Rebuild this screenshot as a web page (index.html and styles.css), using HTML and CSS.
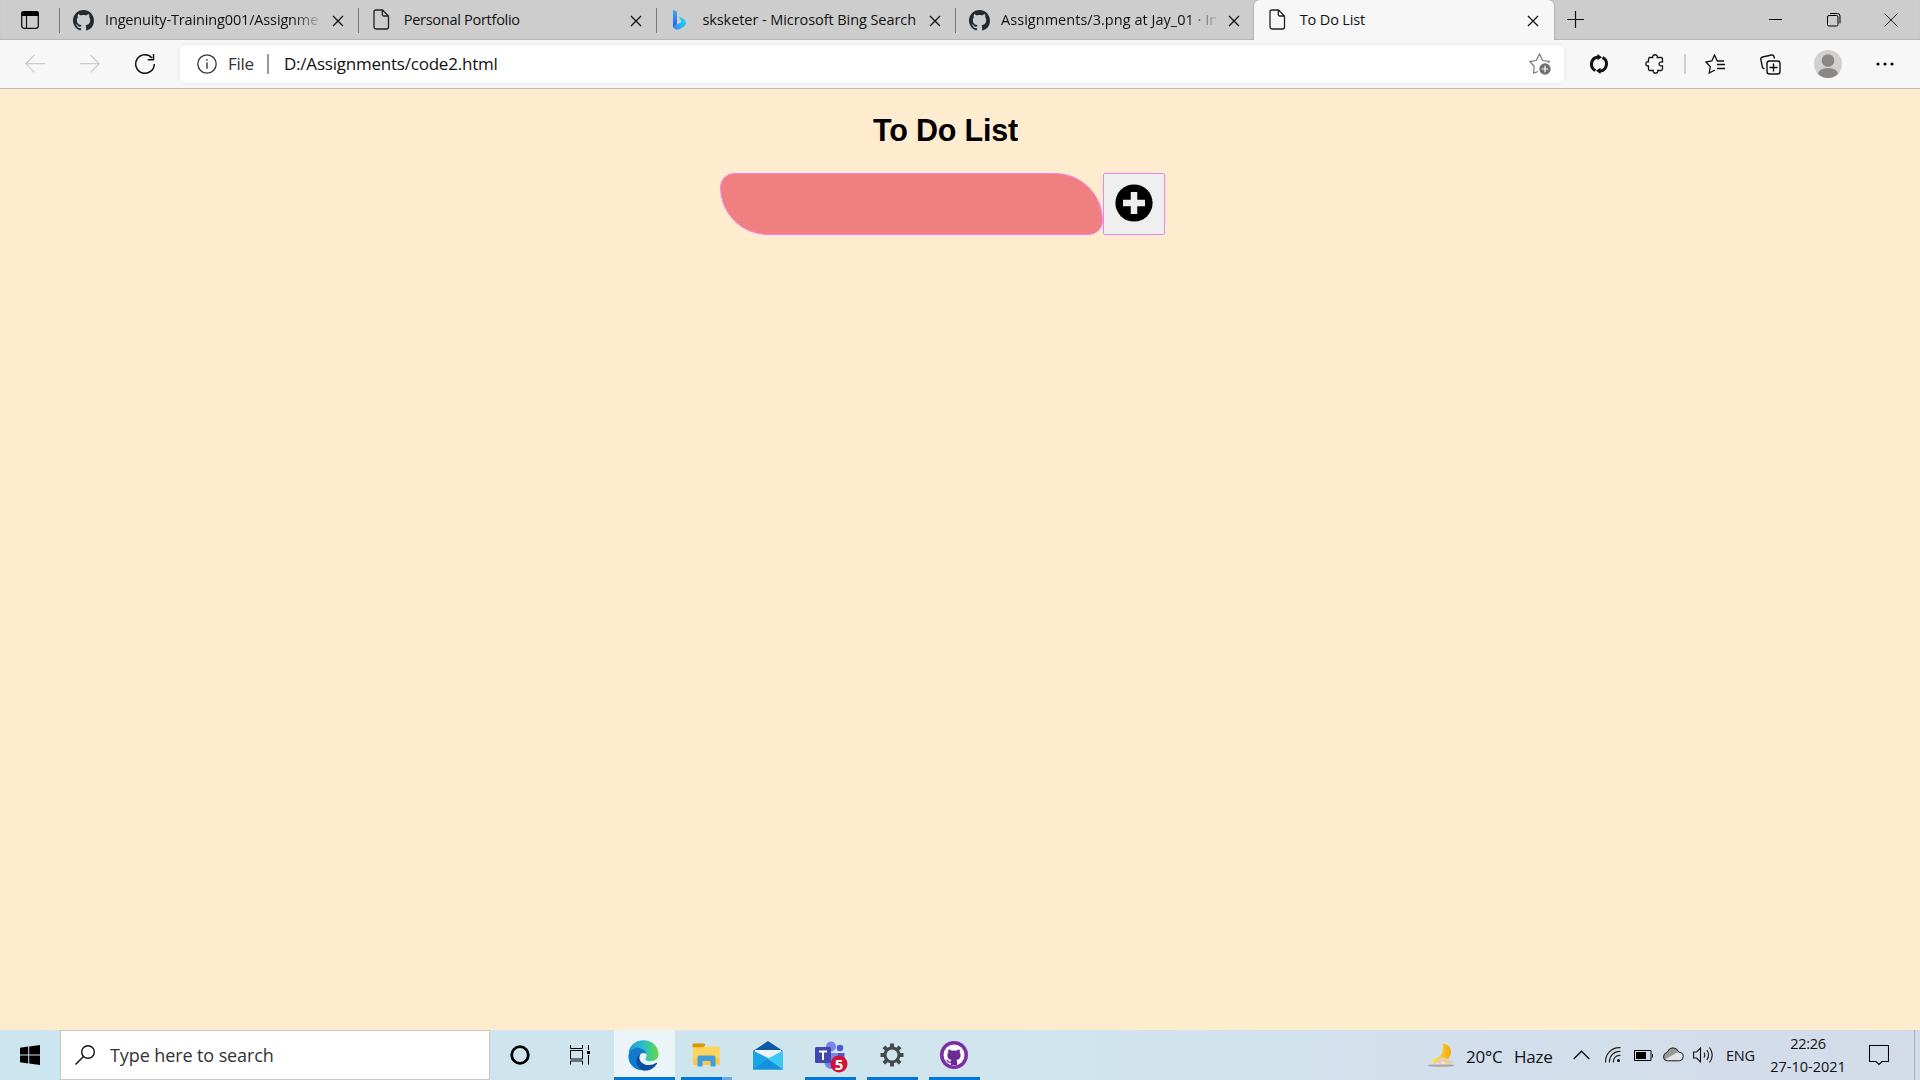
FILE: index.html
```html
<!DOCTYPE html>
<html lang="en">
<head>
<meta charset="utf-8">
<title>To Do List</title>
<link rel="stylesheet" href="styles.css">
</head>
<body>
<svg class="defs" width="0" height="0" aria-hidden="true">
  <symbol id="octocat" viewBox="0 0 16 16"><path d="M8 0C3.58 0 0 3.58 0 8c0 3.54 2.29 6.53 5.47 7.59.4.07.55-.17.55-.38 0-.19-.01-.82-.01-1.49-2.01.37-2.53-.49-2.69-.94-.09-.23-.48-.94-.82-1.13-.28-.15-.68-.52-.01-.53.63-.01 1.08.58 1.23.82.72 1.21 1.87.87 2.33.66.07-.52.28-.87.51-1.07-1.78-.2-3.64-.89-3.64-3.95 0-.87.31-1.59.82-2.15-.08-.2-.36-1.02.08-2.12 0 0 .67-.21 2.2.82.64-.18 1.32-.27 2-.27s1.36.09 2 .27c1.53-1.04 2.2-.82 2.2-.82.44 1.1.16 1.92.08 2.12.51.56.82 1.27.82 2.15 0 3.07-1.87 3.75-3.65 3.95.29.25.54.73.54 1.48 0 1.07-.01 1.93-.01 2.2 0 .21.15.46.55.38A8.01 8.01 0 0 0 16 8c0-4.42-3.58-8-8-8z"/></symbol>
  <symbol id="page" viewBox="0 0 20 22"><path d="M4 1H10.500L16.500 7V18a2 2 0 0 1-2 2H4a2 2 0 0 1-2-2V3a2 2 0 0 1 2-2zM10.300 1V5.500a1.500 1.500 0 0 0 1.500 1.500H16.500" fill="none" stroke="#222" stroke-width="1.300"/></symbol>
  <symbol id="cross" viewBox="0 0 12 12"><path d="M1 1 11 11M11 1 1 11" fill="none" stroke="currentColor" stroke-width="1.300"/></symbol>
</svg>

<header class="tabs">
  <div class="tab-actions">
    <svg width="20" height="20" viewBox="0 0 20 20"><rect x="1.700" y="1.700" width="16.600" height="16.600" rx="2.500" fill="none" stroke="#111" stroke-width="1.300"/><path d="M1 6V4a3 3 0 0 1 3-3h12a3 3 0 0 1 3 3v2z"/><path d="M6.500 6v12" stroke="#111" stroke-width="1.200"/></svg>
  </div>
  <div class="tab">
    <svg class="favicon" width="21" height="21" fill="#24292f"><use href="#octocat"/></svg>
    <span class="title fade t1">Ingenuity-Training001/Assignme</span>
    <svg class="close" width="12" height="12"><use href="#cross"/></svg>
  </div>
  <div class="tab">
    <svg class="favicon" width="20" height="22"><use href="#page"/></svg>
    <span class="title t2">Personal Portfolio</span>
    <svg class="close" width="12" height="12"><use href="#cross"/></svg>
  </div>
  <div class="tab">
    <svg class="favicon" width="20" height="22" viewBox="0 0 20 22"><defs><linearGradient id="b1" x2="0" y2="1"><stop stop-color="#38b0fa"/><stop offset="1" stop-color="#2458e8"/></linearGradient><linearGradient id="b2" x1="1" x2="0" y2="1"><stop stop-color="#22e5e9"/><stop offset="1" stop-color="#2c86f5"/></linearGradient></defs><path d="M3 1 7 2.500V15L3.500 18.500Q3 18 3 17z" fill="url(#b1)"/><path d="M9 7.500 14 10q2.500 1.500 2 5c-.5 2-3 3-5.500 4.600-3.500 2.200-7 .4-7.300-2.200L11.500 13z" fill="url(#b2)"/></svg>
    <span class="title t3">sksketer - Microsoft Bing Search</span>
    <svg class="close" width="12" height="12"><use href="#cross"/></svg>
  </div>
  <div class="tab">
    <svg class="favicon" width="21" height="21" fill="#24292f"><use href="#octocat"/></svg>
    <span class="title fade t4">Assignments/3.png at Jay_01 · In</span>
    <svg class="close" width="12" height="12"><use href="#cross"/></svg>
  </div>
  <div class="tab active">
    <svg class="favicon" width="20" height="22"><use href="#page"/></svg>
    <span class="title t5">To Do List</span>
    <svg class="close" width="12" height="12"><use href="#cross"/></svg>
  </div>
  <svg class="new-tab" width="18" height="18" viewBox="0 0 18 18"><path d="M8.500 0v17M0 8.500h17" stroke="#111" stroke-width="1.200"/></svg>
  <div class="window-controls">
    <svg width="14" height="14" viewBox="0 0 14 14"><path d="M0 6.500h13" stroke="#000"/></svg>
    <svg width="14" height="14" viewBox="0 0 14 14" fill="none" stroke="#000"><rect x=".5" y="2.500" width="10.500" height="10.500" rx="1.500"/><path d="M3 .5h7.500a2.500 2.500 0 0 1 2.500 2.500v7.500"/></svg>
    <svg width="14" height="14" viewBox="0 0 14 14"><path d="M.5.5l13 13M13.500.5l-13 13" stroke="#222"/></svg>
  </div>
</header>

<nav class="toolbar">
  <svg class="back" width="20" height="20" viewBox="0 0 20 20"><path d="M9.500 1 .8 9.700l8.700 8.700M.8 9.700H20" fill="none" stroke="#ccc" stroke-width="1.300"/></svg>
  <svg class="forward" width="20" height="20" viewBox="0 0 20 20"><path d="M10.500 1l8.700 8.700-8.700 8.700M19.200 9.700H0" fill="none" stroke="#ccc" stroke-width="1.300"/></svg>
  <svg class="reload" width="22" height="22" viewBox="0 0 22 22"><path d="M20.300 11A9.300 9.300 0 1 1 18 4.900M19.500 1v5.700h-5.700" fill="none" stroke="#111" stroke-width="1.500"/></svg>
  <div class="omnibox">
    <svg class="info" width="20" height="20" viewBox="0 0 20 20"><circle cx="10" cy="10" r="9.200" fill="none" stroke="#333" stroke-width="1.300"/><path d="M10 8.500v6.300M10 5.200v1.600" stroke="#333" stroke-width="1.400"/></svg>
    <span class="scheme">File</span>
    <span class="divider"></span>
    <span class="url">D:/Assignments/code2.html</span>
    <svg class="favorite" width="22" height="22" viewBox="0 0 22 22"><path d="M9 18.500 4.500 20.200 5.200 13.500 1 8.500l6.200-1L10.500 1l3.200 6.500 6.500 1-1 1.500" fill="none" stroke="#777" stroke-width="1.200"/><circle cx="16" cy="16" r="5.700" fill="#707070"/><path d="M16 12.800v6.400M12.800 16h6.400" stroke="#fff" stroke-width="1.200"/></svg>
  </div>
  <svg class="sync" width="20" height="20" viewBox="0 0 20 20"><path d="M6.500 16.500A7.200 7.200 0 0 1 9 2.900M13.500 3.500A7.200 7.200 0 0 1 11 17.100" fill="none" stroke="#111" stroke-width="3"/><path d="M8.500 0 13 3.300 8.500 6.300zM11.500 20 7 16.700l4.500-3z" fill="#111"/></svg>
  <svg class="puzzle" width="20" height="20" viewBox="0 0 20 20"><path d="M4 3.500h3.700c-1-3.700 5.600-3.700 4.600 0H16q1.500 0 1.500 1.500v3c-4.500-1.200-4.500 5 0 3.800V15q0 1.500-1.500 1.500h-3.200c.8 3.500-5.400 3.500-4.600 0H5q-1.500 0-1.500-1.500v-3c-3.500.8-3.500-5 0-4.200V5q0-1.500 1.500-1.500" fill="none" stroke="#111" stroke-width="1.300"/></svg>
  <span class="tool-divider"></span>
  <svg class="favorites" width="20" height="20" viewBox="0 0 20 20"><path d="M10 16 4.200 19 5.300 12.500.8 8l6-1L9.500 1l2.800 6H19M12 10.500h8M12 14.500h8" fill="none" stroke="#111" stroke-width="1.300"/></svg>
  <svg class="collections" width="21" height="21" viewBox="0 0 21 21"><rect x="7" y="7" width="13" height="13" rx="2.500" fill="none" stroke="#111" stroke-width="1.400"/><path d="M13.500 9.500v8M9.500 13.500h8M4.500 15 2.500 13.500.8 5.500q-.3-2 1.700-2.500l9-2q2-.3 2.500 1.500l.5 2" fill="none" stroke="#111" stroke-width="1.400"/></svg>
  <svg class="profile" width="28" height="28" viewBox="0 0 28 28"><clipPath id="pc"><circle cx="14" cy="14" r="14"/></clipPath><g clip-path="url(#pc)"><path d="M0 0h28v28H0z" fill="#d2d0ce"/><circle cx="14" cy="10.500" r="6.300" fill="#8a8886"/><ellipse cx="14" cy="25" rx="10.500" ry="7" fill="#8a8886"/></g></svg>
  <svg class="more" width="18" height="4" viewBox="0 0 18 4"><circle cx="2" cy="2" r="1.600"/><circle cx="9" cy="2" r="1.600"/><circle cx="16" cy="2" r="1.600"/></svg>
</nav>

<main class="page">
  <h1>To Do List</h1>
  <form class="entry">
    <input class="task" type="text" aria-label="Task">
    <button class="add" type="button" aria-label="Add"><svg width="38" height="38" viewBox="0 0 38 38"><circle cx="19" cy="19" r="18.600"/><path d="M19 8v22M8 19h22" stroke="#efefef" stroke-width="6.500"/></svg></button>
  </form>
</main>

<footer class="taskbar">
  <div class="start"><svg width="20" height="20" viewBox="0 0 20 20"><path d="M0 2.700 8.200 1.600V9.500H0zM9.200 1.400 20 0v9.500H9.200zM0 10.500h8.200v7.900L0 17.300zM9.200 10.500H20V20L9.200 18.600z"/></svg></div>
  <div class="search">
    <svg width="20" height="20" viewBox="0 0 20 20"><circle cx="13" cy="7" r="6.300" fill="none" stroke="#111" stroke-width="1.400"/><path d="M8.500 11.500.5 19.500" stroke="#111" stroke-width="1.400"/></svg>
    <span>Type here to search</span>
  </div>
  <div class="app cortana"><svg width="20" height="20" viewBox="0 0 20 20"><circle cx="10" cy="10" r="8.300" fill="none" stroke="#000" stroke-width="2.800"/></svg></div>
  <div class="app taskview"><svg width="20" height="20" viewBox="0 0 20 20"><path d="M.5 0v3.500h12V0M.5 19.500v-3.500h12v3.500M.5 5.500h12v8.500H.5zM18.500 0v5M18.500 10v9.500" fill="none" stroke="#000"/><path d="M17 6h3v3h-3z"/></svg></div>
  <div class="app edge running current">
    <svg width="31" height="31" viewBox="0 0 31 31"><defs><linearGradient id="e1" x2="1"><stop stop-color="#2298df"/><stop offset=".5" stop-color="#28bfcb"/><stop offset="1" stop-color="#64dc3f"/></linearGradient><linearGradient id="e2" x2=".3" y2="1"><stop stop-color="#167bc3"/><stop offset="1" stop-color="#087adb"/></linearGradient></defs><path d="M.6 13C2-3 28-5 30.500 13c.5 6-3.500 8-8.500 8-4 0-5.500-1.500-4-3.500 2-4-1-7.500-6-7.500-5 0-9 1.500-11.400 3z" fill="url(#e1)"/><path d="M.5 15C2 9 8 6.500 13 8.500c4 1.500 5.500 4 5.500 6-4-3.500-8.500 0-7.500 5 1 5 5 8 9 10C9 33-.5 25 .5 15z" fill="url(#e2)"/><path d="M13 13.500c-4 5 0 11.500 8 11.500 3 0 5-1 7-2 1-.5 1.300.2.800 1-5 7.500-14 8.500-18 3.500-4.500-6-2-12 2.200-14z" fill="#0c4f9c"/></svg>
  </div>
  <div class="app explorer running stacked">
    <svg width="28" height="24" viewBox="0 0 28 24"><path d="M1 3.500h26.500V22H1z" fill="#ffd45b"/><path d="M1 15h26.500v7H1z" fill="#fdc943"/><path d="M.5 1.500Q.5.500 1.500.5h10.700l1.300 1.200-2.200 2.500H.5z" fill="#d99a00"/><path d="M5.500 23.500V14q0-1.500 1.500-1.500h15q1.500 0 1.500 1.500v9.500h-5V18h-8v5.500z" fill="#3e9ddf"/></svg>
  </div>
  <div class="app mail">
    <svg width="30" height="29" viewBox="0 0 30 29"><path d="M0 10 15 0l15 10z" fill="#0c59a4"/><path d="M2 9h26v12H2z" fill="#f2f2f2"/><path d="M0 9.500 17 18 30 28.500H0z" fill="#1ca3e8"/><path d="M30 9.500V28.500L14 18z" fill="#3cc8f5"/><path d="M0 28.500 14.500 18 30 28.500z" fill="#1590dc"/></svg>
  </div>
  <div class="app teams running">
    <svg width="33" height="32" viewBox="0 0 33 32"><circle cx="16" cy="5.500" r="5" fill="#7b83eb"/><circle cx="25" cy="7" r="3.300" fill="#5059c9"/><path d="M9 12h15v9q-1 7-7.500 7T9 20z" fill="#7b83eb"/><path d="M23 12h6.500v8H23z" fill="#5059c9"/><rect y="6" width="16" height="16" rx="1.500" fill="#4049ad"/><path d="M4 10.500h8M8 10.500v8.500" stroke="#fff" stroke-width="2"/><circle cx="24" cy="23" r="8.500" fill="#cf1235"/><text x="24" y="28.500" text-anchor="middle" class="badge">5</text></svg>
  </div>
  <div class="app settings running">
    <svg width="24" height="24" viewBox="-12 -12 24 24"><circle r="7" fill="none" stroke="#45494d" stroke-width="3"/><g stroke="#45494d" stroke-width="4"><path id="tooth" d="M0-7.500V-11.500M0 7.500V11.500"/><use href="#tooth" transform="rotate(45)"/><use href="#tooth" transform="rotate(90)"/><use href="#tooth" transform="rotate(135)"/></g></svg>
  </div>
  <div class="app github running">
    <svg width="28" height="28" viewBox="0 0 28 28"><circle cx="14" cy="14" r="14" fill="#7c2da4"/><circle cx="14" cy="14" r="10.500" fill="#fff"/><path d="M8.500 8.500q2 0 3 1.200 2.500-.6 5 0 1-1.200 3-1.200.6 1.500.2 3 1.300 1.500.8 4-.7 3-4 3.500.7 1 .7 2V24h-6.400v-2q-3 .3-4-2.300l-1-1q2-.3 2.800 1.300.8 1 2.200.5 0-1 .7-1.500-3.300-.5-4-3.500-.5-2.500.8-4-.4-1.500.2-3z" fill="#6b2a94"/></svg>
  </div>
  <div class="tray">
    <svg class="weather" width="29" height="24" viewBox="0 0 29 24"><defs><linearGradient id="m" x2="1"><stop stop-color="#fff14a"/><stop offset="1" stop-color="#f5a90b"/></linearGradient></defs><path d="M15.500.3C26 2 26 12 20 17q-8 6-18-.2C13 17 18 10 15.500.3z" fill="url(#m)"/><ellipse cx="14" cy="22.500" rx="13.500" ry="1.300" fill="#aaa5a5"/><path d="M6 21.500q1-4 4.500-3.500 3-6 8.500-2.200 3-.7 3.500 2.200 4-.7 5 1.500L21 21.500z" fill="#e7cfaf"/><path d="M8 20.500q2-1.500 5 0 3-3 6 0z" fill="#f6eee5"/></svg>
    <span class="temp">20°C</span><span class="condition">Haze</span>
    <svg class="chevron" width="17" height="10" viewBox="0 0 17 10"><path d="M.7 9 8.500 1.200 16.300 9" fill="none" stroke="#111" stroke-width="1.400"/></svg>
    <svg class="wifi" width="16" height="16" viewBox="0 0 16 16" fill="none" stroke="#222" stroke-width="1.200"><path d="M.6 15.500C0 7 7 0 15.500.7M4.500 15.500C4 9 9 4 15.500 4.500M8.500 15.500C8 11 11 8 15.500 8.500"/><circle cx="13.500" cy="13.500" r="1.500" fill="#000" stroke="none"/></svg>
    <svg class="battery" width="20" height="12" viewBox="0 0 20 12"><path d="M.5.5h16.500v10H.5zM18.500 4v3.500" fill="none" stroke="#000"/><path d="M2 2h10v7H2z"/></svg>
    <svg class="cloud" width="21" height="15" viewBox="0 0 21 15"><path d="M4.500 13.500q-4 0-4-3.500T4 5.500Q6 .7 10 .8t6 4.400q4.300.3 4.300 4.300t-4 4z" fill="#999"/><path d="M2 12.500 14 5.500q6 0 6 4t-4 4H4.500z" fill="#e4e4e4"/><path d="M4.500 13.800q-4 0-4-3.800T4 5.500Q6 .7 10 .8t6 4.400q4.300.3 4.300 4.300t-4 4.300z" fill="none" stroke="#222"/></svg>
    <svg class="volume" width="21" height="18" viewBox="0 0 21 18"><path d="M.6 6h3L7.500 2v14l-3.900-4h-3zM11 6.500q1.500 2.500 0 5M13.800 4q3.500 5 0 10M16.500 1.500q5.500 7.500 0 15" fill="none" stroke="#111" stroke-width="1.100"/></svg>
    <span class="lang">ENG</span>
    <div class="clock"><span class="time">22:26</span><span class="date">27-10-2021</span></div>
    <svg class="notifications" width="20" height="21" viewBox="0 0 20 21"><path d="M.5.5h19v16h-6.500L10 19.500 7 16.500H.5z" fill="none" stroke="#000" stroke-width="1.100"/></svg>
    <div class="peek"></div>
  </div>
</footer>
</body>
</html>
```
FILE: styles.css
```css
* { box-sizing: border-box; }
body {
  margin: 0;
  width: 1920px;
  height: 1080px;
  overflow: hidden;
  display: flex;
  flex-direction: column;
  font-family: "Open Sans", "Noto Sans", sans-serif;
  color: #111;
}
svg { display: block; flex: none; }
.defs { position: absolute; }
span { white-space: nowrap; }

/* Tab strip */
.tabs {
  display: flex;
  height: 40px;
  flex: none;
  background: #cdcdcd;
  box-shadow: inset 0 -1px 1px #b5b5b5;
}
.tab-actions { width: 59px; padding: 10px 0 0 20px; }
.tab {
  display: flex;
  align-items: center;
  width: 298.700px;
  padding: 0 14px 0 14px;
  background: linear-gradient(#777, #777) 0 8px / 1px 25px no-repeat;
}
.favicon { margin-right: 12px; }
.title { flex: 1; min-width: 0; font-size: 14.5px; line-height: 24px; }
.fade { -webkit-mask-image: linear-gradient(90deg, #000 calc(100% - 28px), transparent calc(100% + 4px)); mask-image: linear-gradient(90deg, #000 calc(100% - 28px), transparent calc(100% + 4px)); }
.t1 { margin-left: -1px; letter-spacing: -.15px; }
.t2 { letter-spacing: -.27px; }
.t3 { letter-spacing: -.07px; }
.t4 { margin-left: -1px; letter-spacing: .03px; }
.t5 { letter-spacing: -.15px; }
.close { margin: 1px 0 0 12px; }
.tab.active {
  width: 300px;
  padding-right: 15px;
  background: #f7f7f7;
  border-radius: 6px 6px 0 0;
  box-shadow: 0 0 3px #999;
  clip-path: inset(0 -4px 0 -4px);
}
.new-tab { margin: 11px 0 0 13px; }
.window-controls { display: flex; gap: 43.500px; margin: 13px 22px 0 auto; }

/* Address bar */
.toolbar {
  display: flex;
  align-items: center;
  height: 49px;
  flex: none;
  padding: 0 26px 0 25px;
  background: #f7f7f7;
  border-bottom: 1px solid #b9bbbe;
}
.forward { margin-left: 35px; }
.reload { margin-left: 34px; }
.omnibox {
  display: flex;
  align-items: center;
  width: 1384px;
  height: 38px;
  margin-left: 24px;
  padding: 0 13px 0 17px;
  background: #fff;
  border-radius: 5px;
  box-shadow: 0 0 4px #e4e4e4;
  font-size: 17px;
}
.scheme { width: 39px; margin-left: 11px; padding-bottom: 2px; color: #333; letter-spacing: -.3px; }
.divider { width: 2px; height: 20px; background: #999; }
.url { margin-left: 15px; padding-bottom: 2px; letter-spacing: -.22px; }
.favorite { margin-left: auto; }
.sync { margin-left: 25px; }
.puzzle { margin-left: 36px; }
.tool-divider { width: 2px; height: 20px; margin-left: 19px; background: #d0d0d0; }
.favorites { margin-left: 19px; }
.collections { margin-left: 35px; }
.profile { margin-left: 33px; }
.more { margin-left: auto; }

/* Page */
.page {
  flex: 1;
  padding: 23px 29px 0 0;
  background: #ffebcd;
}
h1 { margin: 0; text-align: center; font: bold 30.5px/37px "Liberation Sans", Arial, sans-serif; letter-spacing: -.2px; color: #000; }
.entry { display: flex; margin: 24px 0 0 720px; }
.task {
  width: 383px;
  height: 62px;
  padding: 0 20px;
  border: 1px solid violet;
  border-radius: 15px 50px;
  background: #f08080;
  font-size: 20px;
}
.add {
  display: flex;
  justify-content: center;
  width: 62px;
  height: 62px;
  padding: 10px 0 0;
  border: 1px solid violet;
  border-radius: 2px;
  background: #efefef;
}

/* Taskbar */
.taskbar {
  display: flex;
  height: 50px;
  flex: none;
  background: linear-gradient(90deg, #cde5ee, #d0e5ee 55%, #d3dfec 77%, #d3dbe9);
}
.start { width: 60px; padding: 15px 0 0 20px; }
.search {
  display: flex;
  align-items: center;
  gap: 15px;
  width: 430px;
  padding: 0 14px;
  border: 1px solid #c8c8c8;
  background: #fff;
  color: #333;
  font-size: 18px;
  letter-spacing: -.1px;
}
.app { display: flex; align-items: center; justify-content: center; width: 51px; margin-left: 11px; }
.running { background: linear-gradient(#0078d7, #0078d7) bottom / 100% 3px no-repeat; }
.cortana { width: 60px; margin-left: 0; }
.taskview { width: 60px; margin-left: 0; }
.edge { width: 61px; margin-left: 4px; padding-right: 2px; background-color: #ebf4f8; }
.explorer { margin-left: 6px; padding-right: 1px; background: linear-gradient(90deg, #0078d7 41px, #66ade5 41px) bottom / 100% 3px no-repeat; }
.mail { margin-left: 10.500px; }
.teams { margin-left: 11.500px; padding: 3px 0 0 1px; }
.settings { padding-right: 2px; }
.github { padding-right: 2px; }
.badge { font: bold 15px "Open Sans", sans-serif; fill: #fff; }
.tray { display: flex; align-items: center; margin-left: auto; }
.temp, .condition { font-size: 17px; letter-spacing: -.2px; padding-top: 3px; }
.temp { width: 48px; margin-left: 10px; }
.condition { width: 45px; }
.chevron { margin-left: 14px; }
.wifi { margin-left: 15px; }
.battery { margin: 1px 0 0 13px; }
.cloud { margin: -2px 0 0 9px; }
.volume { margin-left: 9px; }
.lang { width: 29px; margin-left: 12px; font-size: 14.5px; letter-spacing: -.2px; }
.clock { display: flex; flex-direction: column; align-items: center; width: 76px; margin-left: 15px; font-size: 14.5px; line-height: 23px; letter-spacing: -.3px; }
.date { letter-spacing: 0; }
.notifications { margin-left: 23px; }
.peek { align-self: stretch; width: 6px; margin-left: 25px; border-left: 1px solid #a5afbd; }
```
